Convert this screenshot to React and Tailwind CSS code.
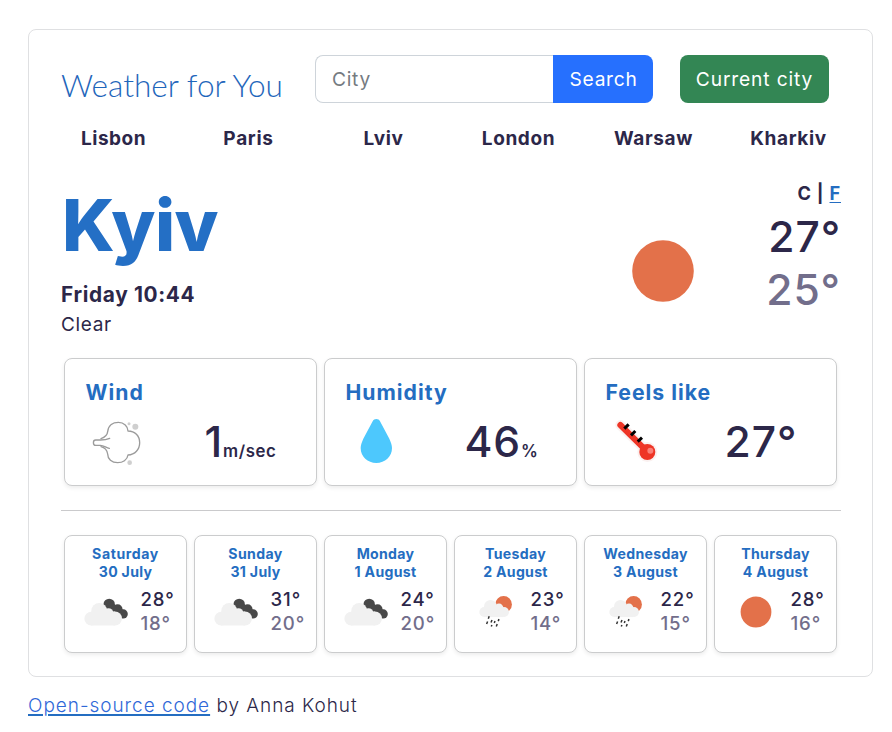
import React from "react";

const cities = [
  ["Lisbon", "tracking-[0.5px]"],
  ["Paris", "tracking-[0.7px]"],
  ["Lviv", "tracking-[0.6px]"],
  ["London", "tracking-[0.6px]"],
  ["Warsaw", "tracking-[0.6px]"],
  ["Kharkiv", "tracking-[0.6px]"],
];

const forecast = [
  { day: "Saturday", date: "30 July", icon: "clouds", max: "28°", min: "18°", track: "tracking-[0.6px]" },
  { day: "Sunday", date: "31 July", icon: "clouds", max: "31°", min: "20°", track: "tracking-[0.4px]" },
  { day: "Monday", date: "1 August", icon: "clouds", max: "24°", min: "20°", track: "tracking-[0.3px]" },
  { day: "Tuesday", date: "2 August", icon: "rain", max: "23°", min: "14°", track: "tracking-[0.3px]" },
  { day: "Wednesday", date: "3 August", icon: "rain", max: "22°", min: "15°", track: "tracking-[0.32px]" },
  { day: "Thursday", date: "4 August", icon: "sun", max: "28°", min: "16°", track: "tracking-[0.34px]" },
];

function SunIcon({ className }) {
  return (
    <svg viewBox="0 0 50 50" className={className}>
      <circle cx="25" cy="25" r="15.4" fill="#e3714a" />
    </svg>
  );
}

function CloudsIcon({ className }) {
  return (
    <svg viewBox="0 0 50 50" className={className}>
      <g fill="#484848">
        <circle cx="28.2" cy="17.4" r="5.7" />
        <circle cx="36.6" cy="22.1" r="4.9" />
        <circle cx="42.2" cy="26.9" r="4.6" />
        <path d="M28 14.5 L45 24.5 L41 31.5 L26 22.5 Z" />
      </g>
      <g fill="#f1f1f1">
        <circle cx="10.3" cy="31.7" r="6.9" />
        <circle cx="18.2" cy="23.9" r="7.9" />
        <circle cx="27.5" cy="26" r="4.8" />
        <circle cx="34" cy="31.5" r="7" />
        <path d="M10 24.5 H34 V38.5 H10 Z" />
      </g>
    </svg>
  );
}

function RainIcon({ className }) {
  return (
    <svg viewBox="0 -0.5 50 50" className={className}>
      <circle cx="32.6" cy="16.9" r="8.3" fill="#e3714a" />
      <g fill="#f1f1f1">
        <circle cx="13.4" cy="24.5" r="5.1" />
        <circle cx="19.5" cy="18.8" r="6.4" />
        <circle cx="28" cy="20.5" r="4.4" />
        <circle cx="33" cy="24.5" r="5" />
        <path d="M13 19 H32 V29.6 H13 Z" />
      </g>
      <path
        d="M18.2 28.8 l-.9 2.4 M16.6 34 l-1 2.6 M21 32.4 l-1 2.6 M20.9 37.4 l-.6 1.6 M28 31.6 l-.8 2 M26.2 36.6 l-.9 2.4 M24 33.6 l-.7 1.8"
        stroke="#333333"
        strokeWidth="1.5"
        fill="none"
      />
    </svg>
  );
}

function WindIcon() {
  return (
    <svg viewBox="111 204 150 150" className="size-[50px]">
      <g fill="none" stroke="#9b9b9b" strokeWidth="4" strokeLinecap="round" strokeLinejoin="round">
        <path d="M138 266 C150 262 157 255 158 245 C160 226 174 217 190 217 C207 217 219 229 219 243 C240 243 254 258 254 278 C254 298 240 314 219 315 C217 330 203 338 188 338 C170 338 158 327 158 312 C156 300 150 293 138 290" />
        <path d="M164 265 C153 270 145 270 136 270 H122 C113 270 113 286 122 286 H136 C147 287 153 293 163 295" />
      </g>
      <g fill="#cfcfcf">
        <circle cx="241" cy="230" r="9" />
        <circle cx="222" cy="221" r="4.5" />
        <circle cx="224" cy="338" r="7" />
      </g>
    </svg>
  );
}

function DropIcon() {
  return (
    <svg viewBox="96 204 150 150" className="size-[50px]">
      <path
        d="M158 214 C162 205 176 205 180 214 L208 266 C213 277 216 286 216 294 C216 320 195 339 169 339 C143 339 122 320 122 294 C122 286 125 277 130 266 Z"
        fill="#4dc8fd"
      />
    </svg>
  );
}

function ThermometerIcon() {
  return (
    <svg viewBox="96 204 150 150" className="size-[50px]">
      <g stroke="#faf1f0" fill="#faf1f0" strokeLinecap="round">
        <path d="M121 225 L195 298" strokeWidth="30" />
        <circle cx="202" cy="306" r="30" stroke="none" />
      </g>
      <path d="M121 225 L195 298" stroke="#ee3526" strokeWidth="18" strokeLinecap="round" />
      <circle cx="202" cy="306" r="24" fill="#ee3526" />
      <circle cx="211" cy="302" r="9" fill="#fa8078" />
      <path d="M133 236 L146 223 M153 256 L166 243 M173 275 L186 263" stroke="#000" strokeWidth="9" />
    </svg>
  );
}

const icons = { sun: SunIcon, clouds: CloudsIcon, rain: RainIcon };

function MetricCard({ title, icon, value, unit }) {
  return (
    <div className="h-32 rounded-lg border border-[#cbcccd] bg-white pt-[17px] shadow-[0_2px_4px_rgba(0,0,0,0.075)]">
      <h3 className="pl-[20.5px] text-[21.2px] leading-8 font-bold tracking-[1px] text-[#246dc1]">{title}</h3>
      <div className="mt-[10px] flex h-[50px] pl-[27px]">
        {icon}
        <p className="ml-[62.5px] text-[42.6px] leading-[48px] font-medium tracking-[0.9px] whitespace-nowrap">
          {value}
          {unit && <span className="text-[16.8px] font-semibold tracking-[0.6px]">{unit}</span>}
        </p>
      </div>
    </div>
  );
}

function ForecastCard({ day, date, icon, max, min, track }) {
  const Icon = icons[icon];
  return (
    <div className="h-[118px] rounded-lg border border-[#cbcccd] bg-white pt-[9px] shadow-[0_2px_4px_rgba(0,0,0,0.075)]">
      <div className="text-center text-[14.1px] leading-[18px] font-bold text-[#246dc1]">
        <div className={track}>{day}</div>
        <div className="tracking-[0.3px]">{date}</div>
      </div>
      <div className="mt-[6px] flex pl-[16px]">
        <Icon className="size-[50px]" />
        <div className="ml-[9.5px] text-[18.6px] leading-6 font-medium tracking-[0.9px]">
          <div>{max}</div>
          <div className="text-[#726e8b]">{min}</div>
        </div>
      </div>
    </div>
  );
}

export default function App() {
  return (
    <div className="h-[732px] overflow-hidden bg-white pt-[29px] pl-[28px] font-['Inter','Liberation_Sans',sans-serif] text-[#2c2749]">
      <main className="h-[648px] w-[845px] rounded-lg border border-[#dfe0e2] pt-[25px] pr-[31px] pl-8">
        <header className="flex h-12">
          <h1 className="w-[254px] pt-[6px] font-['Lato',sans-serif] text-[31.6px] leading-[48px] font-light whitespace-nowrap text-[#1f66bb]">
            Weather for You
          </h1>
          <form className="flex" onSubmit={(e) => e.preventDefault()}>
            <input
              type="text"
              placeholder="City"
              className="w-[238px] rounded-l-lg border border-r-0 border-[#ced4da] px-[16px] text-[19.2px] tracking-[0.7px] outline-none placeholder:text-[#757b81]"
            />
            <button className="w-[100px] rounded-r-lg bg-[#2670fe] pl-px text-[19.2px] tracking-[0.7px] text-white">Search</button>
            <button type="button" className="ml-[27px] w-[149px] rounded-lg bg-[#338654] text-[19.2px] tracking-[0.86px] whitespace-nowrap text-white">
              Current city
            </button>
          </form>
        </header>

        <nav className="-mx-[15px] mt-[21px] grid h-[30px] grid-cols-6 text-center text-[19px] leading-[30px] font-bold">
          {cities.map(([name, track]) => (
            <a key={name} className={track}>{name}</a>
          ))}
        </nav>

        <section className="flex h-[204px]">
          <div className="w-[552px] pt-6">
            <h2 className="pl-px text-[71.5px] leading-[94px] font-extrabold tracking-[-0.6px] text-[#246fc5]">Kyiv</h2>
            <div className="mt-2 text-[20.8px] leading-[30px] font-bold tracking-[0.65px]">Friday 10:44</div>
            <div className="text-[19px] leading-[29px] tracking-[0.65px]">Clear</div>
          </div>
          <SunIcon className="mt-[67px] size-[100px]" />
          <div className="flex-1 pt-[27px] text-right text-[42.6px] font-medium tracking-[0.9px]">
            <div className="text-[18.2px] leading-6 font-bold tracking-[0.8px]">
              C | <a className="text-[#246dc1] underline underline-offset-2">F</a>
            </div>
            <div className="mt-[6px] leading-[52px]">27°</div>
            <div className="leading-[54px] text-[#726e8b]">25°</div>
          </div>
        </section>

        <section className="grid grid-cols-3 gap-[7px] pr-1 pl-[3px]">
          <MetricCard title="Wind" icon={<WindIcon />} value="1" unit="m/sec" />
          <MetricCard title="Humidity" icon={<DropIcon />} value="46" unit="%" />
          <MetricCard title="Feels like" icon={<ThermometerIcon />} value="27°" />
        </section>

        <hr className="my-6 border-[#cacacc]" />

        <section className="grid grid-cols-6 gap-[7px] pr-1 pl-[3px]">
          {forecast.map((item) => (
            <ForecastCard key={item.day} {...item} />
          ))}
        </section>
      </main>

      <footer className="mt-[14px] text-[19px] leading-[30px] font-light tracking-[0.96px]">
        <a className="text-[#2f68d8] underline decoration-[#246dc1] decoration-2 underline-offset-[2px]">Open-source code</a> by Anna Kohut
      </footer>
    </div>
  );
}
